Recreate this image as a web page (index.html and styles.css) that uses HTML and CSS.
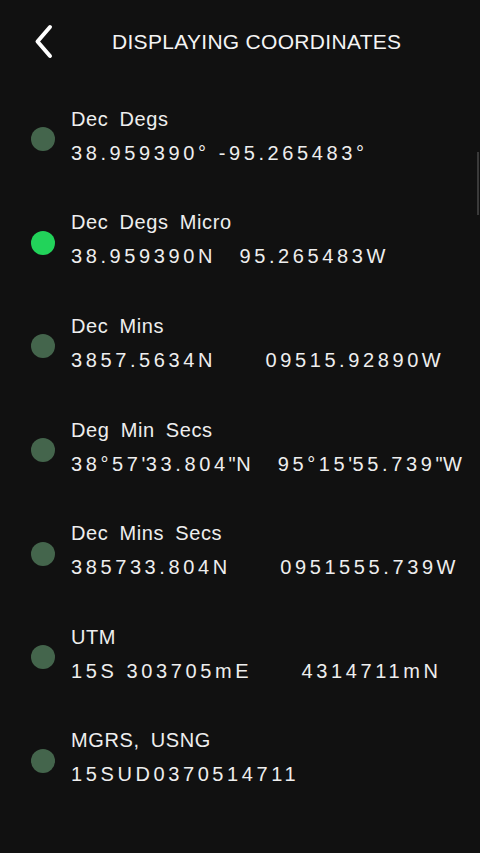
FILE: index.html
```html
<!DOCTYPE html>
<html>
<head>
<meta charset="utf-8">
<link rel="stylesheet" href="styles.css">
</head>
<body>
<div class="screen">
  <header class="header">
    <svg class="back" width="24" height="36" viewBox="0 0 24 36">
      <polyline points="16,3 3.5,17.5 16,32" fill="none" stroke="#fff" stroke-width="4" stroke-linecap="round" stroke-linejoin="round"/>
    </svg>
    <h1 class="title">DISPLAYING COORDINATES</h1>
  </header>
  <ul class="list">
    <li class="row"><span class="dot"></span><div class="text"><div class="label">Dec Degs</div><div class="value">38.959390° -95.265483°</div></div></li>
    <li class="row"><span class="dot on"></span><div class="text"><div class="label">Dec Degs Micro</div><div class="value">38.959390N<span class="gap1"></span>95.265483W</div></div></li>
    <li class="row"><span class="dot"></span><div class="text"><div class="label">Dec Mins</div><div class="value">3857.5634N<span class="gap2"></span>09515.92890W</div></div></li>
    <li class="row"><span class="dot"></span><div class="text"><div class="label">Deg Min Secs</div><div class="value">38°57<span class="q">'</span>33.804<span class="q">"</span>N<span class="gap1"></span>95°15<span class="q">'</span>55.739<span class="q">"</span>W</div></div></li>
    <li class="row"><span class="dot"></span><div class="text"><div class="label">Dec Mins Secs</div><div class="value">385733.804N<span class="gap2"></span>0951555.739W</div></div></li>
    <li class="row"><span class="dot"></span><div class="text"><div class="label">UTM</div><div class="value">15S 303705mE<span class="gap2"></span>4314711mN</div></div></li>
    <li class="row"><span class="dot"></span><div class="text"><div class="label">MGRS, USNG</div><div class="value">15SUD0370514711</div></div></li>
  </ul>
  <div class="scrollbar"></div>
</div>
</body>
</html>
```
FILE: styles.css
```css
html, body {
  margin: 0;
  padding: 0;
  background: #111111;
}
.screen {
  position: relative;
  width: 480px;
  height: 853px;
  overflow: hidden;
  background: #111111;
  color: #eeeeee;
  font-family: "Liberation Sans", Arial, sans-serif;
}
.header {
  height: 84px;
  display: flex;
  align-items: center;
}
.back {
  margin-left: 34px;
  flex: none;
}
.title {
  margin: 0 0 0 54px;
  font-size: 21px;
  font-weight: normal;
  letter-spacing: 0.3px;
  color: #f4f4f4;
}
.list {
  list-style: none;
  margin: 0;
  padding: 0;
}
.row {
  display: flex;
  align-items: center;
  padding: 17.8px 0;
}
.dot {
  flex: none;
  width: 24px;
  height: 24px;
  border-radius: 50%;
  background: #44654c;
  margin: 7px 0 0 31px;
}
.dot.on {
  background: #22d35a;
}
.text {
  margin-left: 16px;
}
.label {
  font-size: 20px;
  line-height: 34px;
  letter-spacing: 0.6px;
  word-spacing: 5px;
}
.value {
  font-size: 20px;
  line-height: 34px;
  letter-spacing: 3.6px;
  white-space: pre;
}
.q {
  letter-spacing: 0.5px;
}
.gap1 {
  display: inline-block;
  width: 23.5px;
}
.gap2 {
  display: inline-block;
  width: 49.5px;
}
.scrollbar {
  position: absolute;
  right: 1px;
  top: 152px;
  width: 2px;
  height: 63px;
  background: #3a3a3a;
}
```
